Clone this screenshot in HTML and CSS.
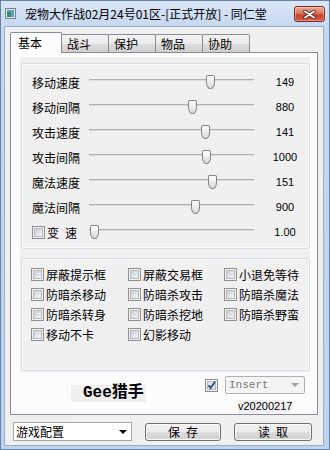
FILE: index.html
```html
<!DOCTYPE html>
<html lang="zh-CN">
<head>
    <meta charset="UTF-8">
    <meta name="viewport" content="width=device-width, initial-scale=1.0">
    <title>宠物大作战</title>
    <link rel="stylesheet" href="styles.css">
</head>
<body>
    <div class="window">
        <div class="titlebar">
            <svg class="app-icon" width="11" height="11" viewBox="0 0 11 11">
                <rect x="0.5" y="0.5" width="10" height="10" fill="#e6eaee" stroke="#7d8288"/>
                <rect x="2" y="2" width="7" height="7" fill="#5aa3c4"/>
                <rect x="2" y="4" width="4" height="5" fill="#3d8c68"/>
            </svg>
            <span class="title">宠物大作战02月24号01区-[正式开放] - 同仁堂</span>
            <div class="close-btn">
                <svg width="13" height="9" viewBox="0 0 13 9">
                    <path d="M2 1.5 L11 7.5 M11 1.5 L2 7.5" stroke="#5a1a12" stroke-width="3.6" stroke-linecap="round"/>
                    <path d="M2 1.5 L11 7.5 M11 1.5 L2 7.5" stroke="#fff" stroke-width="2" stroke-linecap="round"/>
                </svg>
            </div>
        </div>

        <div class="client">
            <div class="tabs">
                <div class="tab active">基本</div>
                <div class="tab">战斗</div>
                <div class="tab">保护</div>
                <div class="tab">物品</div>
                <div class="tab">协助</div>
            </div>

            <div class="panel">
                <div class="page">
                    <div class="group sliders">
                        <div class="row">
                            <span class="label">移动速度</span>
                            <div class="slider"><div class="track"></div><div class="thumb" style="left:117px"></div></div>
                            <span class="value">149</span>
                        </div>
                        <div class="row">
                            <span class="label">移动间隔</span>
                            <div class="slider"><div class="track"></div><div class="thumb" style="left:99px"></div></div>
                            <span class="value">880</span>
                        </div>
                        <div class="row">
                            <span class="label">攻击速度</span>
                            <div class="slider"><div class="track"></div><div class="thumb" style="left:112px"></div></div>
                            <span class="value">141</span>
                        </div>
                        <div class="row">
                            <span class="label">攻击间隔</span>
                            <div class="slider"><div class="track"></div><div class="thumb" style="left:113px"></div></div>
                            <span class="value">1000</span>
                        </div>
                        <div class="row">
                            <span class="label">魔法速度</span>
                            <div class="slider"><div class="track"></div><div class="thumb" style="left:119px"></div></div>
                            <span class="value">151</span>
                        </div>
                        <div class="row">
                            <span class="label">魔法间隔</span>
                            <div class="slider"><div class="track"></div><div class="thumb" style="left:102px"></div></div>
                            <span class="value">900</span>
                        </div>
                        <div class="row">
                            <span class="label speed"><span class="cb"></span>变&ensp;速</span>
                            <div class="slider"><div class="track"></div><div class="thumb" style="left:1px"></div></div>
                            <span class="value">1.00</span>
                        </div>
                    </div>

                    <div class="group checks">
                        <div class="check"><span class="cb"></span>屏蔽提示框</div>
                        <div class="check"><span class="cb"></span>屏蔽交易框</div>
                        <div class="check"><span class="cb"></span>小退免等待</div>
                        <div class="check"><span class="cb"></span>防暗杀移动</div>
                        <div class="check"><span class="cb"></span>防暗杀攻击</div>
                        <div class="check"><span class="cb"></span>防暗杀魔法</div>
                        <div class="check"><span class="cb"></span>防暗杀转身</div>
                        <div class="check"><span class="cb"></span>防暗杀挖地</div>
                        <div class="check"><span class="cb"></span>防暗杀野蛮</div>
                        <div class="check"><span class="cb"></span>移动不卡</div>
                        <div class="check"><span class="cb"></span>幻影移动</div>
                    </div>
                </div>

                <div class="footer">
                    <div class="brand">Gee猎手</div>
                    <div class="hotkey">
                        <div class="hotkey-row">
                            <svg class="cb-checked" width="13" height="13" viewBox="0 0 13 13">
                                <rect x="0.5" y="0.5" width="12" height="12" fill="#f4f4f4" stroke="#8e8f8f"/>
                                <rect x="2.5" y="2.5" width="8" height="8" fill="#e2e5e8" stroke="#b5b9bf"/>
                                <path d="M3.5 6.3 L5.6 9 L10 2.8" fill="none" stroke="#2a4c8c" stroke-width="1.8"/>
                            </svg>
                            <div class="combo disabled"><span>Insert</span><i class="arrow"></i></div>
                        </div>
                        <div class="version">v20200217</div>
                    </div>
                </div>
            </div>

            <div class="bottombar">
                <div class="combo config"><span>游戏配置</span><i class="arrow"></i></div>
                <div class="btn">保&ensp;存</div>
                <div class="btn load">读&ensp;取</div>
            </div>
        </div>
    </div>
</body>
</html>
```

FILE: styles.css
```css
body {
    margin: 0;
    font-family: "Noto Sans CJK SC", "Liberation Sans", sans-serif;
    font-size: 12px;
    color: #000;
}
.window {
    width: 330px;
    height: 450px;
    box-sizing: border-box;
    border: 1px solid #6584ad;
    background: linear-gradient(to bottom, #dae6f5 0, #c7d9f0 25px, #bfd3ec 100%);
    display: flex;
    flex-direction: column;
}

/* title bar */
.titlebar {
    height: 25px;
    display: flex;
    align-items: center;
    padding-left: 4px;
}
.app-icon {
    margin-right: 9px;
    flex-shrink: 0;
}
.title {
    line-height: 16px;
    white-space: nowrap;
}
.close-btn {
    margin-left: auto;
    margin-right: 4px;
    align-self: flex-start;
    margin-top: 5px;
    width: 31px;
    height: 16px;
    box-sizing: border-box;
    border: 1px solid #7f2b1f;
    border-radius: 3px;
    background: linear-gradient(to bottom, #eaa998 0%, #da7863 45%, #c5432c 55%, #d45a41 100%);
    box-shadow: inset 0 0 0 1px rgba(255,255,255,0.35);
    display: flex;
    align-items: center;
    justify-content: center;
}

/* client area */
.client {
    flex: 1;
    margin: 0 5px 3px 3px;
    border: 1px solid #97aecb;
    background: #f0f0f0;
    display: flex;
    flex-direction: column;
}
.tabs {
    margin-top: 5px;
    height: 20px;
    padding-left: 5px;
    display: flex;
    align-items: flex-end;
}
.tab {
    box-sizing: border-box;
    width: 48px;
    height: 18px;
    margin-left: -1px;
    padding-left: 5px;
    border: 1px solid #898c95;
    border-bottom: none;
    border-radius: 2px 2px 0 0;
    background: linear-gradient(to bottom, #f3f3f3 0%, #ebebeb 50%, #dedede 50%, #d0d0d0 100%);
    line-height: 17px;
}
.tab.active {
    position: relative;
    z-index: 1;
    width: 52px;
    height: 21px;
    margin-left: 0;
    margin-bottom: -1px;
    padding-left: 7px;
    background: #fcfcfc;
    line-height: 20px;
}
.panel {
    box-sizing: border-box;
    height: 363px;
    margin: 0 5px;
    border: 1px solid #898c95;
    background: #fcfcfc;
    display: flex;
    flex-direction: column;
}
.page {
    height: 315px;
    margin: 4px 7px 0 9px;
    padding-left: 1px;
    background: #f0f0f0;
    display: flex;
    flex-direction: column;
}
.group {
    box-sizing: border-box;
    border: 1px solid #d5dfe5;
    border-radius: 3px;
    box-shadow: inset 0 0 0 1px #fbfbfb;
}

/* sliders */
.sliders {
    margin-top: 6px;
    height: 186px;
    padding: 6px 0 0 10px;
}
.row {
    display: grid;
    grid-template-columns: 57px 165px 62px;
    height: 25px;
}
.label {
    line-height: 25px;
    white-space: nowrap;
}
.label.speed {
    display: flex;
    align-items: center;
}
.label.speed .cb {
    margin-right: 2px;
}
.slider {
    position: relative;
}
.track {
    margin-top: 9px;
    height: 0;
    border-top: 1px solid #b0b0b0;
    border-bottom: 1px solid #dcdcdc;
}
.thumb {
    position: absolute;
    top: 5px;
    width: 9px;
    height: 14px;
    box-sizing: border-box;
    border: 1px solid #858585;
    border-radius: 2px 2px 50% 50% / 2px 2px 45% 45%;
    background: linear-gradient(to bottom, #fefefe, #dadada);
}
.value {
    font-family: "Liberation Sans", sans-serif;
    font-size: 11px;
    line-height: 25px;
    text-align: center;
}

/* checkbox */
.cb {
    width: 13px;
    height: 13px;
    box-sizing: border-box;
    border: 1px solid #8e8f8f;
    background: #f4f4f4;
    padding: 1px;
    flex-shrink: 0;
}
.cb::after {
    content: "";
    display: block;
    width: 9px;
    height: 9px;
    box-sizing: border-box;
    border: 1px solid #b5b9bf;
    background: linear-gradient(135deg, #cbced3, #f5f5f5);
}
.checks {
    margin-top: 9px;
    height: 113px;
    padding: 5px 0 0 9px;
    display: grid;
    grid-template-columns: 97px 96px 1fr;
    grid-auto-rows: 20px;
    align-content: start;
}
.check {
    display: flex;
    align-items: center;
    white-space: nowrap;
}
.check .cb {
    margin-right: 2px;
}

/* footer */
.footer {
    flex: 1;
    display: flex;
    padding-left: 60px;
}
.brand {
    box-sizing: border-box;
    margin-top: 13px;
    width: 75px;
    height: 17px;
    padding-left: 12px;
    background: #f0f0f0;
    font-family: "Liberation Mono", "Noto Sans CJK SC", monospace;
    font-weight: bold;
    font-size: 16px;
    line-height: 17px;
    white-space: nowrap;
}
.hotkey {
    margin-left: 59px;
    display: flex;
    flex-direction: column;
}
.hotkey-row {
    margin-top: 4px;
    height: 18px;
    display: flex;
    align-items: center;
}
.cb-checked {
    margin-right: 7px;
}
.combo {
    box-sizing: border-box;
    display: flex;
    align-items: center;
    justify-content: space-between;
}
.combo.disabled {
    width: 80px;
    height: 18px;
    padding: 0 5px 0 3px;
    border: 1px solid #adb2b5;
    border-radius: 2px;
    background: #f4f4f4;
    color: #7a7a7a;
    font-family: "Liberation Mono", monospace;
    font-size: 11px;
}
.arrow {
    width: 0;
    height: 0;
    border-left: 4px solid transparent;
    border-right: 4px solid transparent;
    border-top: 4px solid #000;
}
.combo.disabled .arrow {
    border-top-color: #a2a2a2;
}
.version {
    margin-top: 6px;
    margin-left: 33px;
    width: 54px;
    height: 13px;
    background: #f0f0f0;
    font-family: "Liberation Sans", sans-serif;
    font-size: 11px;
    line-height: 13px;
}

/* bottom row */
.bottombar {
    margin-top: 7px;
    padding-left: 8px;
    display: flex;
}
.combo.config {
    width: 119px;
    height: 19px;
    padding: 0 4px 0 2px;
    border: 1px solid #a5a9ae;
    background: #fff;
}
.btn {
    box-sizing: border-box;
    width: 76px;
    height: 18px;
    margin: 1px 0 0 13px;
    border: 1px solid #707070;
    border-radius: 3px;
    background: linear-gradient(to bottom, #f2f2f2 0%, #ebebeb 50%, #dddddd 50%, #cfcfcf 100%);
    box-shadow: inset 0 0 0 1px #fbfbfb;
    text-align: center;
    line-height: 16px;
}
.btn.load {
    width: 78px;
}
```
